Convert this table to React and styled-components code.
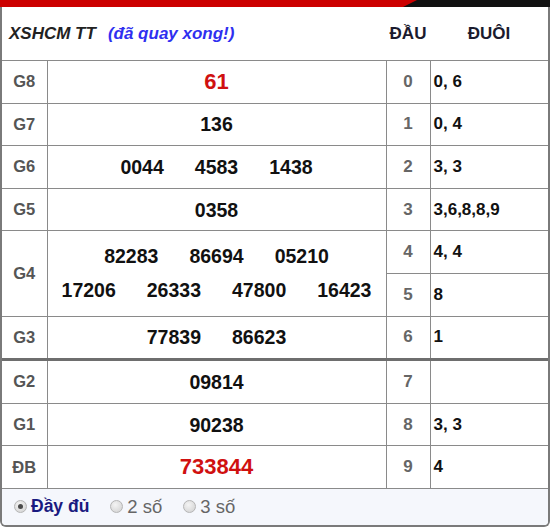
import React from "react";
import styled, { createGlobalStyle } from "styled-components";

const GlobalStyle = createGlobalStyle`
  body {
    margin: 0;
    background: #fff;
    font-family: "Liberation Sans", Arial, sans-serif;
  }
`;

const Page = styled.div`
  width: 550px;
`;

const TopBar = styled.div`
  height: 7px;
  background: #cc0000;
  display: flex;
  justify-content: flex-end;
`;

const TopCorner = styled.div`
  width: 147px;
  background: #111;
  clip-path: polygon(14px 0, 100% 0, 100% 100%, 0 100%);
`;

const Box = styled.div`
  border: 2px solid #7a7a7a;
  border-top: none;
  border-radius: 0 0 6px 6px;
  overflow: hidden;
`;

const Table = styled.table`
  width: 100%;
  table-layout: fixed;
  border-collapse: collapse;
  border-style: hidden;
`;

const Head = styled.th`
  height: 53px;
  padding: 0;
  border-bottom: 1px solid #8a8a8a;
  font-size: 17px;
  font-weight: bold;
  color: #1b1b2e;
  text-align: ${(p) => (p.$left ? "left" : "center")};
  padding-left: ${(p) => (p.$left ? "7px" : "0")};
`;

const Title = styled.span`
  font-style: italic;
  color: #222;
  font-size: 17px;
`;

const Status = styled.span`
  font-style: italic;
  color: #2f2ff0;
  margin-left: 12px;
  font-size: 17px;
`;

const Cell = styled.td`
  border: 1px solid #8a8a8a;
  border-top: ${(p) => (p.$thick ? "3px solid #6e6e6e" : "1px solid #8a8a8a")};
  height: 41.6px;
  padding: 0;
  vertical-align: middle;
`;

const Label = styled(Cell)`
  text-align: center;
  font-size: 16.5px;
  font-weight: bold;
  color: #555;
`;

const Prize = styled(Cell)`
  text-align: center;
  font-weight: bold;
  color: ${(p) => (p.$red ? "#d01010" : "#111")};
  font-size: ${(p) => (p.$red ? "22px" : "19.5px")};
`;

const Lines = styled.div`
  display: flex;
  flex-direction: column;
  align-items: center;
  line-height: 34px;
`;

const Numbers = styled.div`
  display: flex;
  justify-content: center;
  gap: 31px;
`;

const Head2 = styled(Cell)`
  text-align: center;
  font-size: 17px;
  font-weight: bold;
  color: #666;
`;

const Tail = styled(Cell)`
  padding-left: 3px;
  font-size: 17px;
  font-weight: bold;
  color: #111;
`;

const Footer = styled.div`
  height: 36px;
  background: #f5f7fc;
  border-top: 1px solid #8a8a8a;
  display: flex;
  align-items: center;
  gap: 21px;
  padding-left: 12px;
`;

const Option = styled.label`
  display: flex;
  align-items: center;
  gap: 4px;
  font-size: ${(p) => (p.$active ? "17.5px" : "18.5px")};
  font-weight: ${(p) => (p.$active ? "bold" : "normal")};
  color: ${(p) => (p.$active ? "#1a1a80" : "#666")};
`;

const Radio = styled.span`
  width: 11px;
  height: 11px;
  border-radius: 50%;
  border: 1px solid #b5b5b5;
  background: radial-gradient(circle at 40% 35%, #f4f4f4, #cfcfcf);
  display: flex;
  align-items: center;
  justify-content: center;
  &::after {
    content: "";
    width: 5px;
    height: 5px;
    border-radius: 50%;
    background: ${(p) => (p.$checked ? "#4a4a4a" : "transparent")};
  }
`;

const prizes = [
  { name: "G8", rows: [["61"]], red: true },
  { name: "G7", rows: [["136"]] },
  { name: "G6", rows: [["0044", "4583", "1438"]] },
  { name: "G5", rows: [["0358"]] },
  {
    name: "G4",
    rows: [
      ["82283", "86694", "05210"],
      ["17206", "26333", "47800", "16423"],
    ],
  },
  { name: "G3", rows: [["77839", "86623"]] },
  { name: "G2", rows: [["09814"]], thick: true },
  { name: "G1", rows: [["90238"]] },
  { name: "ĐB", rows: [["733844"]], red: true },
];

const tails = ["0, 6", "0, 4", "3, 3", "3,6,8,8,9", "4, 4", "8", "1", "", "3, 3", "4"];

function buildRows() {
  const out = [];
  let d = 0;
  prizes.forEach((p) => {
    const span = p.rows.length === 2 ? 2 : 1;
    for (let i = 0; i < span; i++) {
      const thick = p.thick && i === 0;
      out.push(
        <tr key={p.name + i}>
          {i === 0 && (
            <>
              <Label rowSpan={span} $thick={thick}>
                {p.name}
              </Label>
              <Prize rowSpan={span} $red={p.red} $thick={thick}>
                <Lines>
                  {p.rows.map((r, k) => (
                    <Numbers key={k}>
                      {r.map((n) => (
                        <span key={n}>{n}</span>
                      ))}
                    </Numbers>
                  ))}
                </Lines>
              </Prize>
            </>
          )}
          <Head2 $thick={thick}>{d}</Head2>
          <Tail $thick={thick}>{tails[d]}</Tail>
        </tr>
      );
      d++;
    }
  });
  return out;
}

export default function App() {
  return (
    <Page>
      <GlobalStyle />
      <TopBar>
        <TopCorner />
      </TopBar>
      <Box>
        <Table>
          <colgroup>
            <col style={{ width: 45 }} />
            <col style={{ width: 339 }} />
            <col style={{ width: 44 }} />
            <col />
          </colgroup>
          <thead>
            <tr>
              <Head colSpan={2} $left>
                <Title>XSHCM TT</Title>
                <Status>(đã quay xong!)</Status>
              </Head>
              <Head>ĐẦU</Head>
              <Head>ĐUÔI</Head>
            </tr>
          </thead>
          <tbody>{buildRows()}</tbody>
        </Table>
        <Footer>
          <Option $active>
            <Radio $checked />
            Đầy đủ
          </Option>
          <Option>
            <Radio />2 số
          </Option>
          <Option>
            <Radio />3 số
          </Option>
        </Footer>
      </Box>
    </Page>
  );
}
